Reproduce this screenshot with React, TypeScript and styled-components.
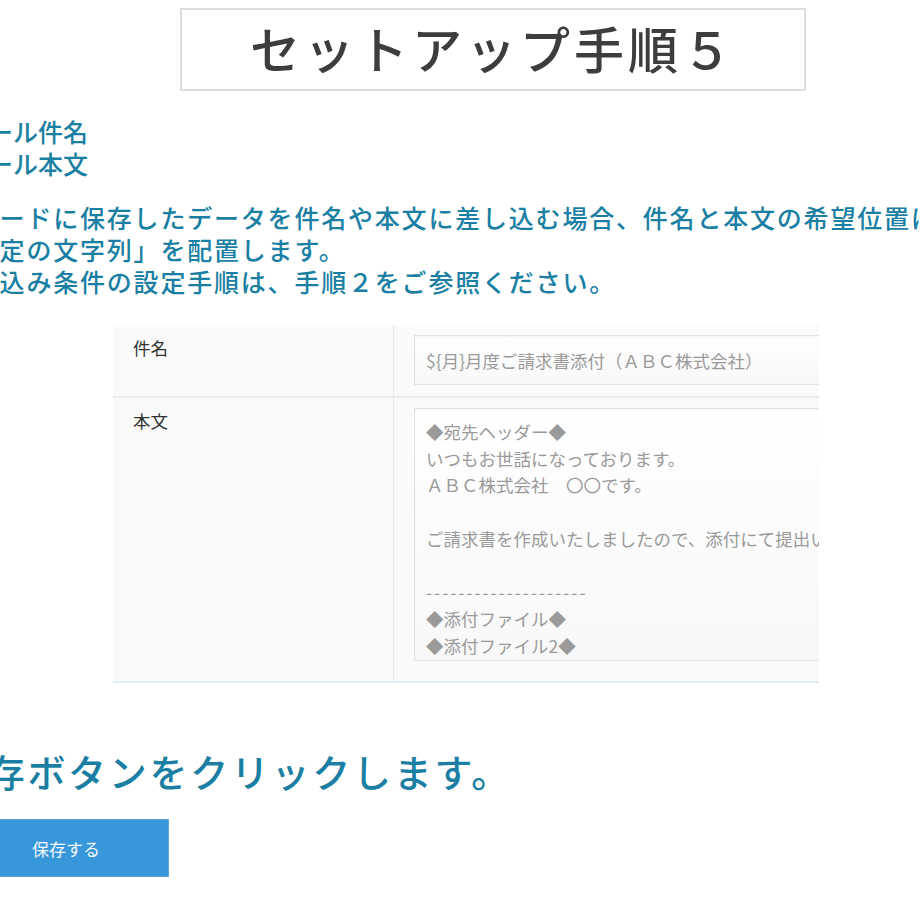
import React from "react";
import styled, { createGlobalStyle } from "styled-components";

const GlobalStyle = createGlobalStyle`
  html, body {
    margin: 0;
    padding: 0;
    background: #ffffff;
    overflow: hidden;
  }
  body {
    font-family: "Noto Sans CJK JP", "Noto Sans", sans-serif;
  }
`;

const Page = styled.div`
  width: 1094px;
  margin-left: -54px;
  padding-top: 8px;
  display: flex;
  flex-direction: column;
  white-space: nowrap;
`;

const TitleBox = styled.div`
  align-self: center;
  box-sizing: border-box;
  width: 626px;
  height: 83px;
  border: 2px solid #dcdcdc;
  display: flex;
  align-items: center;
  justify-content: center;
  font-size: 50px;
  font-weight: 500;
  letter-spacing: 4px;
  color: #3d3d3d;
  padding-bottom: 6px;
`;

const TextBlock = styled.div<{ $indent?: number; $top: number; $spacing?: number }>`
  margin-top: ${(p) => p.$top}px;
  padding-left: ${(p) => p.$indent ?? 0}px;
  color: #1a7fa3;
  font-size: 25px;
  font-weight: 500;
  line-height: 32px;
  letter-spacing: ${(p) => p.$spacing ?? 0}px;
`;

const Line = styled.div``;

const Shot = styled.div`
  margin: 28px 0 0 167px;
  width: 706px;
  overflow: hidden;
  background: #fafafa;
  border-bottom: 2px solid #e4eef8;
  font-size: 17.5px;
  color: #333;
`;

const Row = styled.div<{ $last?: boolean }>`
  display: grid;
  grid-template-columns: 281px 1fr;
  border-bottom: ${(p) => (p.$last ? "none" : "2px solid #e9eced")};
`;

const Label = styled.div`
  padding: 11px 20px;
  line-height: 24px;
  border-right: 1px solid #e6e9e9;
`;

const Cell = styled.div<{ $bottom: number }>`
  padding: 10px 0 ${(p) => p.$bottom}px 20px;
  min-width: 0;
`;

const Field = styled.div<{ $height: number }>`
  box-sizing: border-box;
  width: 520px;
  height: ${(p) => p.$height}px;
  border: 1px solid #e1e4e4;
  background: linear-gradient(#ffffff, #f8f8f8);
  box-shadow: inset 0 1px 3px rgba(0, 0, 0, 0.05);
  color: #9a9a9a;
  font-size: 17.5px;
  padding: 0 11px;
`;

const SingleField = styled(Field)`
  display: flex;
  align-items: center;
`;

const AreaField = styled(Field)`
  padding-top: 10px;
  line-height: 26.7px;
`;

const AreaLine = styled.div<{ $dashes?: boolean }>`
  min-height: 26.7px;
  letter-spacing: ${(p) => (p.$dashes ? "2px" : "0")};
`;

const Heading = styled.div`
  margin-top: 61px;
  color: #1a7fa3;
  font-size: 38px;
  font-weight: 500;
  letter-spacing: 2.7px;
  line-height: 53px;
`;

const SaveButton = styled.button`
  margin: 22px 0 0 17px;
  align-self: flex-start;
  box-sizing: border-box;
  width: 206px;
  height: 58px;
  border: 1px solid #5ea9df;
  background: #3897db;
  color: #f2f8fc;
  font-family: "Noto Sans CJK JP", sans-serif;
  font-size: 17px;
  cursor: pointer;
`;

const bodyLines = [
  "◆宛先ヘッダー◆",
  "いつもお世話になっております。",
  "ＡＢＣ株式会社　〇〇です。",
  "",
  "ご請求書を作成いたしましたので、添付にて提出いたします。",
  "",
  "--------------------",
  "◆添付ファイル◆",
  "◆添付ファイル2◆",
];

export default function App() {
  return (
    <>
      <GlobalStyle />
      <Page>
        <TitleBox>セットアップ手順５</TitleBox>
        <TextBlock $top={24} $indent={17}>
          <Line>メール件名</Line>
          <Line>メール本文</Line>
        </TextBlock>
        <TextBlock $top={22} $spacing={1.8}>
          <Line>レコードに保存したデータを件名や本文に差し込む場合、件名と本文の希望位置に</Line>
          <Line>「指定の文字列」を配置します。</Line>
          <Line>差し込み条件の設定手順は、手順２をご参照ください。</Line>
        </TextBlock>
        <Shot>
          <Row>
            <Label>件名</Label>
            <Cell $bottom={11}>
              <SingleField $height={50}>${"{月}"}月度ご請求書添付（ＡＢＣ株式会社）</SingleField>
            </Cell>
          </Row>
          <Row $last>
            <Label>本文</Label>
            <Cell $bottom={20}>
              <AreaField $height={253}>
                {bodyLines.map((l, i) => (
                  <AreaLine key={i} $dashes={l.startsWith("-")}>
                    {l}
                  </AreaLine>
                ))}
              </AreaField>
            </Cell>
          </Row>
        </Shot>
        <Heading>保存ボタンをクリックします。</Heading>
        <SaveButton>保存する</SaveButton>
      </Page>
    </>
  );
}
